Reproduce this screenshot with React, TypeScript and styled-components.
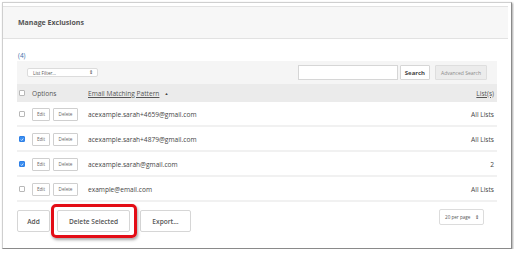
import React from "react";
import styled, { createGlobalStyle } from "styled-components";

const Global = createGlobalStyle`
  html, body { margin: 0; padding: 0; background: #ffffff; }
  body { font-family: "Open Sans", "Liberation Sans", sans-serif; color: #444; }
  * { box-sizing: border-box; }
`;

const Window = styled.div`
  margin: 2px 0 0 2px;
  width: 510px;
  height: 247px;
  background: #fff;
  border: 1px solid #cfcfcf;
  border-right-color: #8a8a8a;
  border-bottom-color: #8a8a8a;
  box-shadow: 1px 1px 2px rgba(0, 0, 0, 0.35);
  padding-top: 3px;
  display: flex;
  flex-direction: column;
`;

const Header = styled.div`
  width: 505px;
  height: 33px;
  background: #f7f7f7;
  border-top: 1px solid #e2e2e2;
  border-bottom: 1px solid #e2e2e2;
  display: flex;
  align-items: center;
  padding-left: 15px;
  font-size: 7px;
  font-weight: 700;
  color: #555;
`;

const Body = styled.div`
  padding: 0 14px 0 14px;
  display: flex;
  flex-direction: column;
`;

const Count = styled.div`
  font-size: 6.4px;
  color: #3d6ea8;
  height: 22px;
  display: flex;
  align-items: flex-end;
  padding-left: 1px;
  padding-bottom: 1px;
`;

const Toolbar = styled.div`
  height: 23px;
  background: #f5f5f5;
  display: flex;
  align-items: center;
  padding: 0 10px;
  gap: 2px;
`;

const Select = styled.div<{ $w: number; $h: number }>`
  flex-shrink: 0;
  width: ${(p) => p.$w}px;
  height: ${(p) => p.$h}px;
  background: #fff;
  border: 1px solid #dcdcdc;
  border-radius: 2px;
  display: flex;
  align-items: center;
  justify-content: space-between;
  padding: 0 4px 0 5px;
  font-size: 4.6px;
  color: #555;
`;

const Arrows = styled.span`
  font-size: 5px;
  line-height: 1;
  color: #333;
`;

const Spacer = styled.div`
  flex: 1;
`;

const SearchInput = styled.div`
  width: 100px;
  height: 15px;
  background: #fff;
  border: 1px solid #d6d6d6;
`;

const SmallButton = styled.div<{ $disabled?: boolean }>`
  height: 15px;
  padding: 0 ${(p) => (p.$disabled ? "5px" : "4px")};
  display: flex;
  align-items: center;
  font-size: ${(p) => (p.$disabled ? "5px" : "6px")};
  font-weight: ${(p) => (p.$disabled ? 400 : 700)};
  color: ${(p) => (p.$disabled ? "#8a8a8a" : "#444")};
  background: ${(p) => (p.$disabled ? "#ececec" : "#fff")};
  border: 1px solid ${(p) => (p.$disabled ? "#dedede" : "#d6d6d6")};
  border-radius: 1px;
  margin-left: ${(p) => (p.$disabled ? "3px" : "0")};
`;

const Table = styled.div`
  display: flex;
  flex-direction: column;
`;

const HeadRow = styled.div`
  height: 18px;
  background: #ebebeb;
  display: grid;
  grid-template-columns: 13px 56px 1fr auto;
  align-items: center;
  padding: 0 3px 0 2px;
  font-size: 6.6px;
  color: #555;
`;

const Row = styled.div`
  height: 25px;
  display: grid;
  grid-template-columns: 13px 56px 1fr auto;
  align-items: center;
  padding: 1px 3px 0 2px;
  font-size: 6.6px;
  color: #444;
  border-bottom: 2px solid #f1f1f1;
`;

const Check = styled.span<{ $on?: boolean }>`
  width: 6px;
  height: 6px;
  border-radius: 1px;
  border: 1px solid ${(p) => (p.$on ? "#2f80e6" : "#b8b8b8")};
  background: ${(p) => (p.$on ? "#3a8ef0" : "#fff")};
  display: flex;
  align-items: center;
  justify-content: center;
`;

const SortLink = styled.span`
  text-decoration: underline;
  color: #555;
`;

const Caret = styled.span`
  font-size: 4px;
  margin-left: 5px;
  vertical-align: 1px;
  color: #444;
`;

const Options = styled.div`
  display: flex;
  gap: 3px;
`;

const RowButton = styled.span<{ $w: number }>`
  width: ${(p) => p.$w}px;
  height: 13px;
  display: flex;
  align-items: center;
  justify-content: center;
  border: 1px solid #cfcfcf;
  border-radius: 1px;
  font-size: 4.6px;
  color: #666;
  background: #fff;
`;

const Right = styled.span`
  text-align: right;
`;

const Footer = styled.div`
  display: flex;
  align-items: flex-start;
  padding-top: 8px;
`;

const BigButton = styled.div<{ $w: number }>`
  flex-shrink: 0;
  width: ${(p) => p.$w}px;
  height: 22px;
  display: flex;
  align-items: center;
  justify-content: center;
  font-size: 6.6px;
  font-weight: 600;
  color: #555;
  background: #fff;
  border: 1px solid #d6d6d6;
  border-radius: 2px;
`;

const Highlight = styled.div`
  position: relative;
  margin: 0 10px 0 7px;
  &::after {
    content: "";
    position: absolute;
    left: -6px;
    right: -7px;
    top: -6px;
    bottom: -6px;
    border: 3px solid #e30d16;
    border-radius: 5px;
    box-shadow: 1px 2px 3px rgba(0, 0, 0, 0.35);
  }
`;

const FooterRight = styled.div`
  flex: 1;
  display: flex;
  justify-content: flex-end;
  padding-right: 13px;
  margin-top: -1px;
`;

const Tick = () => (
  <svg width="5" height="5" viewBox="0 0 10 10">
    <path d="M2 5.2 L4.2 7.4 L8.2 2.6" stroke="#fff" strokeWidth="1.8" fill="none" />
  </svg>
);

const rows = [
  { email: "acexample.sarah+4659@gmail.com", lists: "All Lists", on: false },
  { email: "acexample.sarah+4879@gmail.com", lists: "All Lists", on: true },
  { email: "acexample.sarah@gmail.com", lists: "2", on: true },
  { email: "example@email.com", lists: "All Lists", on: false },
];

export default function App() {
  return (
    <>
      <Global />
      <Window>
        <Header>Manage Exclusions</Header>
        <Body>
          <Count>(4)</Count>
          <Toolbar>
            <Select $w={71} $h={9}>
              <span>List Filter...</span>
              <Arrows>⇕</Arrows>
            </Select>
            <Spacer />
            <SearchInput />
            <SmallButton>Search</SmallButton>
            <SmallButton $disabled>Advanced Search</SmallButton>
          </Toolbar>
          <Table>
            <HeadRow>
              <Check />
              <span>Options</span>
              <span>
                <SortLink>Email Matching Pattern</SortLink>
                <Caret>▲</Caret>
              </span>
              <Right>
                <SortLink>List(s)</SortLink>
              </Right>
            </HeadRow>
            {rows.map((r) => (
              <Row key={r.email}>
                <Check $on={r.on}>{r.on && <Tick />}</Check>
                <Options>
                  <RowButton $w={18}>Edit</RowButton>
                  <RowButton $w={25}>Delete</RowButton>
                </Options>
                <span>{r.email}</span>
                <Right>{r.lists}</Right>
              </Row>
            ))}
          </Table>
          <Footer>
            <BigButton $w={33}>Add</BigButton>
            <Highlight>
              <BigButton $w={73}>Delete Selected</BigButton>
            </Highlight>
            <BigButton $w={51}>Export...</BigButton>
            <FooterRight>
              <Select $w={45} $h={16}>
                <span>20 per page</span>
                <Arrows>⇕</Arrows>
              </Select>
            </FooterRight>
          </Footer>
        </Body>
      </Window>
    </>
  );
}
